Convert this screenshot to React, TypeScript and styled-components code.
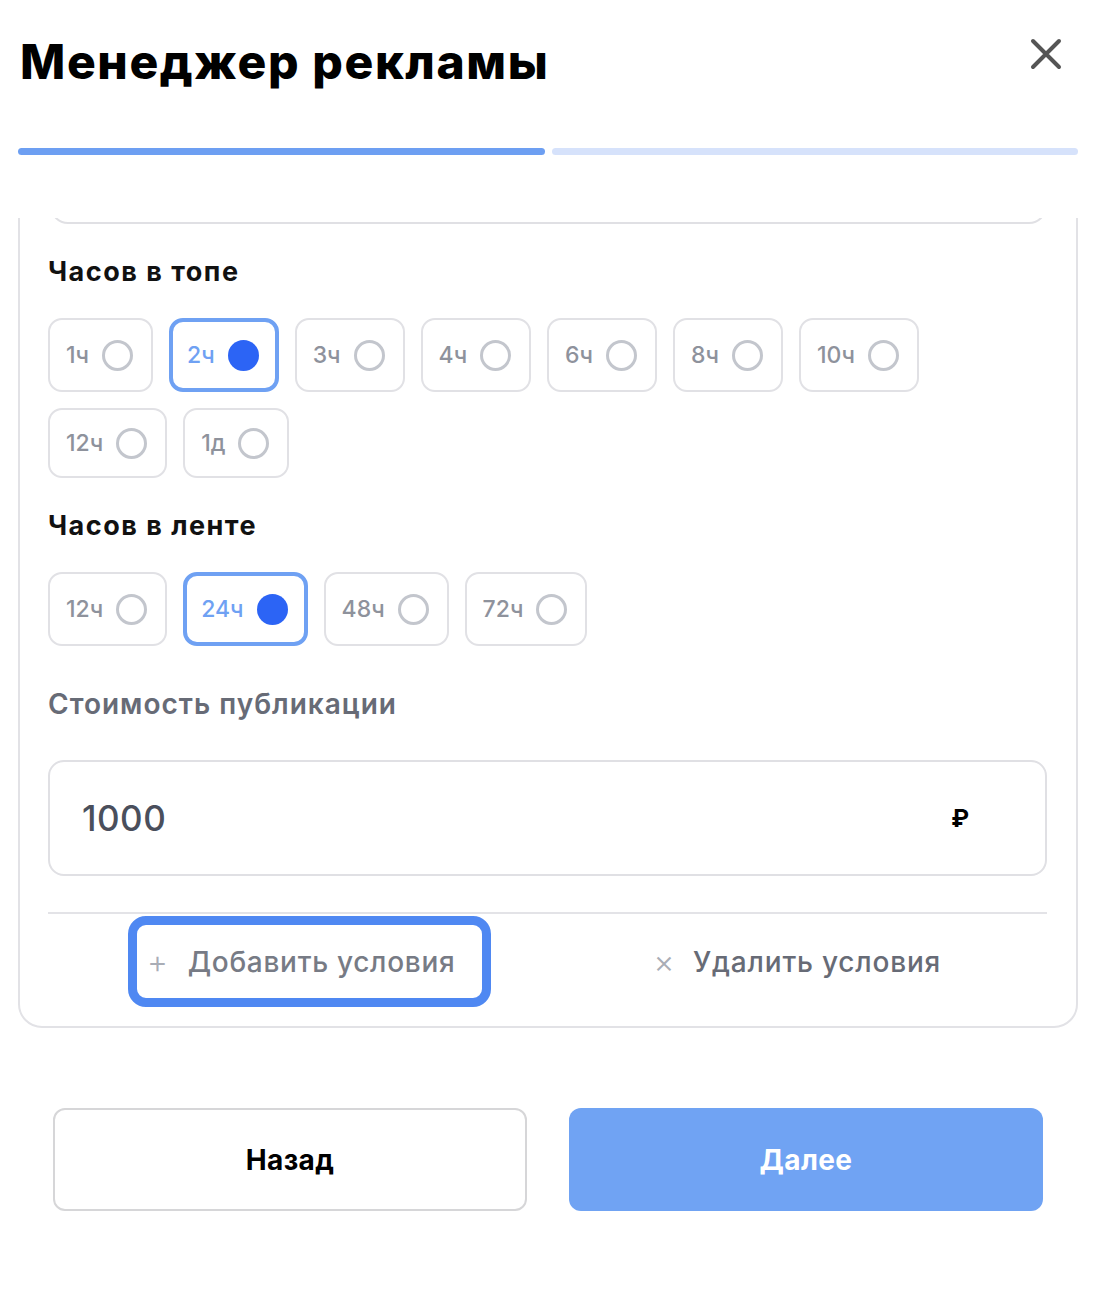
import React, { useState } from 'react';
import styled, { createGlobalStyle } from 'styled-components';

const topHours = ['1ч', '2ч', '3ч', '4ч', '6ч', '8ч', '10ч', '12ч', '1д'];
const feedHours = ['12ч', '24ч', '48ч', '72ч'];

const App = () => {
    const [top, setTop] = useState('2ч');
    const [feed, setFeed] = useState('24ч');

    return (
        <Page>
            <GlobalStyle />
            <Header>
                <Title>Менеджер рекламы</Title>
                <CloseButton aria-label="Закрыть">
                    <svg width="32" height="32" viewBox="0 0 32 32">
                        <path d="M3 3 L29 29 M29 3 L3 29" stroke="#555" strokeWidth="4" strokeLinecap="round" />
                    </svg>
                </CloseButton>
            </Header>

            <Progress>
                <Step $active />
                <Step />
            </Progress>

            <ScrollArea>
                <Card>
                    <PrevField />

                    <SectionTitle>Часов в топе</SectionTitle>
                    <ChipRow>
                        {topHours.map((h) => (
                            <Chip key={h} $selected={top === h} onClick={() => setTop(h)}>
                                {h}
                                <Radio $selected={top === h} />
                            </Chip>
                        ))}
                    </ChipRow>

                    <SectionTitle>Часов в ленте</SectionTitle>
                    <ChipRow>
                        {feedHours.map((h) => (
                            <Chip key={h} $selected={feed === h} onClick={() => setFeed(h)}>
                                {h}
                                <Radio $selected={feed === h} />
                            </Chip>
                        ))}
                    </ChipRow>

                    <FieldLabel>Стоимость публикации</FieldLabel>
                    <PriceField>
                        <PriceValue>1000</PriceValue>
                        <Currency>₽</Currency>
                    </PriceField>

                    <Actions>
                        <AddButton>
                            <Sign>+</Sign>
                            Добавить условия
                        </AddButton>
                        <RemoveButton>
                            <Sign>×</Sign>
                            Удалить условия
                        </RemoveButton>
                    </Actions>
                </Card>
            </ScrollArea>

            <Footer>
                <BackButton>Назад</BackButton>
                <NextButton>Далее</NextButton>
            </Footer>
        </Page>
    );
};

const GlobalStyle = createGlobalStyle`
    body {
        margin: 0;
        background: #fff;
        font-family: Inter, "Noto Sans", sans-serif;
    }
`;

const Page = styled.div`
    width: 1100px;
    height: 1290px;
    box-sizing: border-box;
    padding: 0 22px 0 18px;
    overflow: hidden;
`;

const Header = styled.div`
    display: flex;
    align-items: flex-start;
    justify-content: space-between;
    padding: 30px 16px 0 2px;
    height: 118px;
    box-sizing: border-box;
`;

const Title = styled.h1`
    margin: 0;
    font-size: 48px;
    font-weight: 800;
    color: #000;
    letter-spacing: 1.6px;
    line-height: 64px;
`;

const CloseButton = styled.button`
    border: none;
    background: none;
    padding: 0;
    margin-top: 8px;
    cursor: pointer;
    width: 32px;
    height: 32px;
`;

const Progress = styled.div`
    display: flex;
    gap: 7px;
    margin-top: 30px;
`;

const Step = styled.div<{ $active?: boolean }>`
    flex: 1;
    height: 7px;
    border-radius: 4px;
    background: ${(p) => (p.$active ? '#6d9ff2' : '#d6e2fb')};
`;

const ScrollArea = styled.div`
    margin-top: 63px;
    height: 810px;
    overflow: hidden;
`;

const Card = styled.div`
    margin-top: -126px;
    border: 2px solid #e2e2e6;
    border-radius: 24px;
    padding: 10px 29px 19px 28px;
`;

const PrevField = styled.div`
    height: 116px;
    border: 2px solid #e0e0e4;
    border-radius: 18px;
    margin: 0 0 0 2px;
`;

const SectionTitle = styled.h3`
    margin: 32px 0 0;
    font-size: 27px;
    font-weight: 700;
    color: #111;
    letter-spacing: 1.5px;
    line-height: 32px;
`;

const ChipRow = styled.div`
    display: flex;
    flex-wrap: wrap;
    gap: 16px;
    margin-top: 30px;
    margin-bottom: 4px;
`;

const Chip = styled.button<{ $selected?: boolean }>`
    display: flex;
    align-items: center;
    gap: 13px;
    min-height: ${(p) => (p.$selected ? '74px' : '70px')};
    box-sizing: border-box;
    padding: ${(p) => (p.$selected ? '0 16px 0 14px' : '0 18px 0 16px')};
    border: ${(p) => (p.$selected ? '4px solid #6fa1f3' : '2px solid #e1e1e5')};
    border-radius: 14px;
    background: #fff;
    font-family: inherit;
    font-size: 23px;
    font-weight: 500;
    letter-spacing: 0;
    color: ${(p) => (p.$selected ? '#6fa1f3' : '#8e929c')};
    cursor: pointer;
`;

const Radio = styled.span<{ $selected?: boolean }>`
    display: inline-block;
    box-sizing: border-box;
    width: 31px;
    height: 31px;
    border-radius: 50%;
    border: ${(p) => (p.$selected ? 'none' : '3px solid #c3c6cd')};
    background: ${(p) => (p.$selected ? '#2c64f5' : '#fff')};
`;

const FieldLabel = styled.div`
    margin-top: 42px;
    font-size: 28px;
    font-weight: 600;
    color: #676b76;
    letter-spacing: 1px;
    line-height: 32px;
`;

const PriceField = styled.div`
    display: flex;
    align-items: center;
    justify-content: space-between;
    margin-top: 40px;
    height: 116px;
    box-sizing: border-box;
    border: 2px solid #e0e0e4;
    border-radius: 16px;
    padding: 0 76px 0 32px;
`;

const PriceValue = styled.span`
    font-size: 35px;
    font-weight: 500;
    color: #4a4f5c;
    letter-spacing: 0.5px;
`;

const Currency = styled.span`
    font-size: 24px;
    font-weight: 700;
    color: #000;
`;

const Actions = styled.div`
    display: grid;
    grid-template-columns: 1fr 1fr;
    align-items: center;
    margin-top: 36px;
    padding-top: 2px;
    border-top: 2px solid #e3e3e7;
`;

const AddButton = styled.button`
    justify-self: center;
    margin-left: 24px;
    display: flex;
    align-items: center;
    gap: 19px;
    height: 91px;
    box-sizing: border-box;
    padding: 0 27px 0 10px;
    border: 9px solid #4f88f2;
    border-radius: 18px;
    background: #fff;
    font-family: inherit;
    font-size: 28px;
    font-weight: 500;
    letter-spacing: 0.7px;
    color: #777b85;
    cursor: pointer;
`;

const RemoveButton = styled.button`
    justify-self: center;
    display: flex;
    align-items: center;
    gap: 18px;
    border: none;
    background: none;
    font-family: inherit;
    font-size: 28px;
    font-weight: 500;
    letter-spacing: 0.8px;
    color: #676b76;
    cursor: pointer;
`;

const Sign = styled.span`
    font-size: 32px;
    font-weight: 300;
    color: #a9adb6;
`;

const Footer = styled.div`
    display: grid;
    grid-template-columns: 1fr 1fr;
    gap: 42px;
    padding: 80px 35px 0;
`;

const BaseButton = styled.button`
    height: 103px;
    border-radius: 12px;
    font-family: inherit;
    font-size: 28px;
    font-weight: 700;
    letter-spacing: 0.4px;
    cursor: pointer;
`;

const BackButton = styled(BaseButton)`
    background: #fff;
    border: 2px solid #d6d6d8;
    color: #000;
`;

const NextButton = styled(BaseButton)`
    background: #70a3f3;
    border: none;
    color: #fff;
`;

export default App;
